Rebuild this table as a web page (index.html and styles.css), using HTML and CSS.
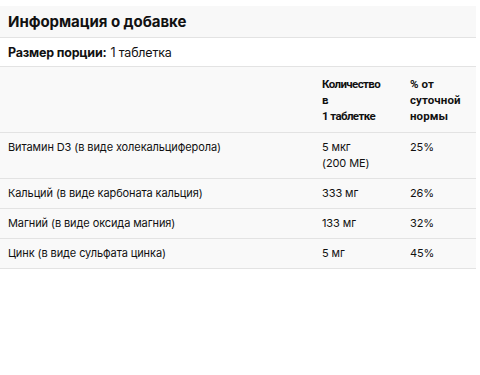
FILE: index.html
```html
<!DOCTYPE html>
<html lang="ru">
<head>
<meta charset="utf-8">
<link rel="stylesheet" href="styles.css">
</head>
<body>
<div class="panel">
  <div class="title">Информация о добавке</div>
  <div class="serving"><b>Размер порции:</b> 1 таблетка</div>
  <table class="facts">
    <colgroup>
      <col class="w-name">
      <col class="w-qty">
      <col class="w-pct">
    </colgroup>
    <thead>
      <tr>
        <th class="c-name"></th>
        <th class="c-qty">Количество<br>в<br>1 таблетке</th>
        <th class="c-pct">% от<br>суточной<br>нормы</th>
      </tr>
    </thead>
    <tbody>
      <tr><td class="c-name">Витамин D3 (в виде холекальциферола)</td><td class="c-qty">5 мкг<br>(200 МЕ)</td><td class="c-pct">25%</td></tr>
      <tr><td class="c-name">Кальций (в виде карбоната кальция)</td><td class="c-qty">333 мг</td><td class="c-pct">26%</td></tr>
      <tr><td class="c-name">Магний (в виде оксида магния)</td><td class="c-qty">133 мг</td><td class="c-pct">32%</td></tr>
      <tr><td class="c-name">Цинк (в виде сульфата цинка)</td><td class="c-qty">5 мг</td><td class="c-pct">45%</td></tr>
    </tbody>
  </table>
</div>
</body>
</html>
```

FILE: styles.css
```css
html, body {
  margin: 0;
  padding: 0;
  background: #fff;
}
body {
  font-family: Inter, "Noto Sans", sans-serif;
  color: #111;
  padding-top: 6px;
}
.panel {
  width: 476px;
}
.title {
  background: #f8f8f8;
  height: 32px;
  box-sizing: border-box;
  padding: 0 8px;
  display: flex;
  align-items: center;
  font-size: 15px;
  font-weight: 700;
  letter-spacing: -0.05px;
  border-bottom: 1px solid #e3e3e3;
}
.serving {
  height: 29px;
  box-sizing: border-box;
  padding: 0 8px;
  display: flex;
  align-items: center;
  font-size: 12.5px;
  letter-spacing: -0.2px;
  border-bottom: 1px solid #e3e3e3;
}
.serving b {
  font-weight: 700;
  margin-right: 4px;
}
.facts {
  width: 476px;
  table-layout: fixed;
  border-collapse: collapse;
  background: #f9f9f9;
  font-size: 11px;
  letter-spacing: -0.1px;
}
.w-name { width: 322px; }
.w-qty { width: 88px; }
.w-pct { width: 66px; }
.facts th, .facts td {
  text-align: left;
  vertical-align: top;
  line-height: 16px;
  border-bottom: 1px solid #e3e3e3;
  padding: 6px 0 7px 0;
  white-space: nowrap;
}
.facts th {
  font-family: Roboto, Inter, sans-serif;
  font-weight: 700;
  font-size: 11.5px;
  letter-spacing: -0.3px;
  padding: 9px 0 8px 0;
}
.facts th.c-qty { letter-spacing: -0.6px; }
.facts th.c-pct { letter-spacing: 0.1px; }
.facts .c-name { padding-left: 8px; }
```
